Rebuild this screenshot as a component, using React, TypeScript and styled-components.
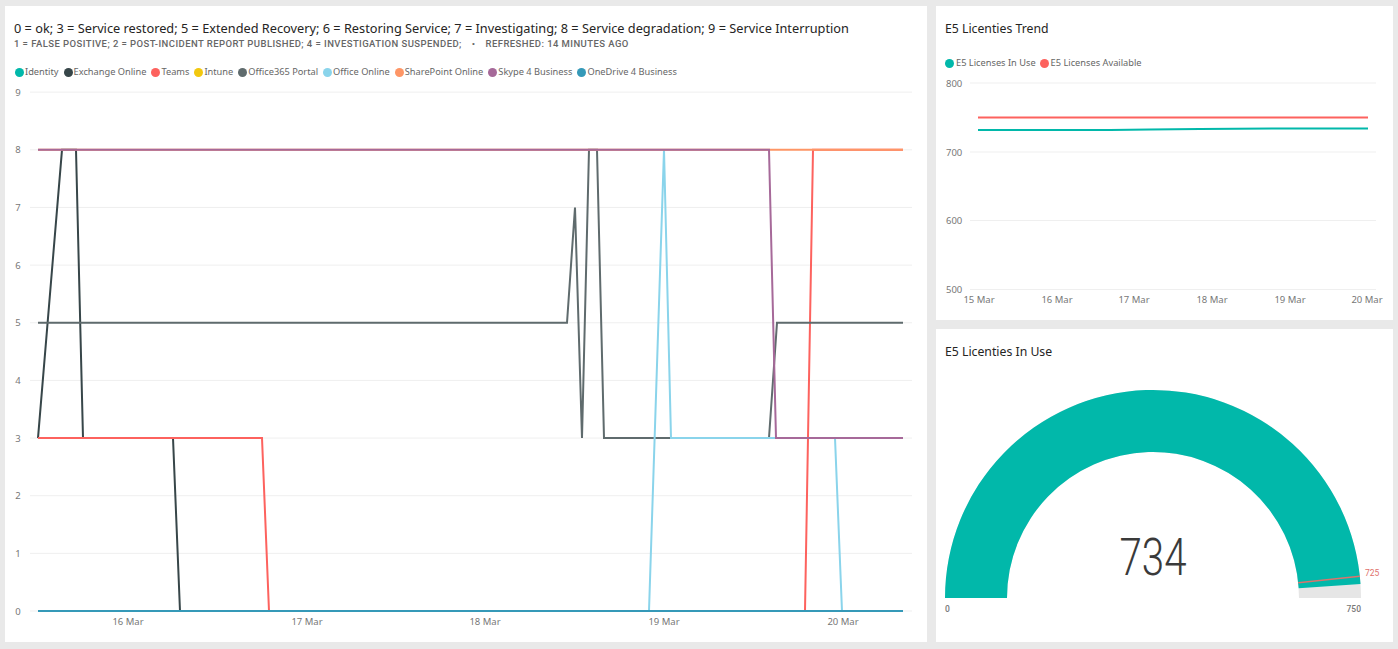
import React from "react";
import styled, { createGlobalStyle } from "styled-components";

const COLORS = {
  identity: "#01b8aa",
  exchange: "#374649",
  teams: "#fd625e",
  intune: "#f2c80f",
  portal: "#5f6b6d",
  office: "#8ad4eb",
  sharepoint: "#fe9666",
  skype: "#a66999",
  onedrive: "#3599b8",
};

const statusLegend = [
  { name: "Identity", color: COLORS.identity },
  { name: "Exchange Online", color: COLORS.exchange },
  { name: "Teams", color: COLORS.teams },
  { name: "Intune", color: COLORS.intune },
  { name: "Office365 Portal", color: COLORS.portal },
  { name: "Office Online", color: COLORS.office },
  { name: "SharePoint Online", color: COLORS.sharepoint },
  { name: "Skype 4 Business", color: COLORS.skype },
  { name: "OneDrive 4 Business", color: COLORS.onedrive },
];

const trendLegend = [
  { name: "E5 Licenses In Use", color: COLORS.identity },
  { name: "E5 Licenses Available", color: COLORS.teams },
];

// status value -> y in page pixels
const sy = (v: number) => 611 - v * 57.65;
const pts = (list: number[][]) => list.map(([x, v]) => `${x},${sy(v)}`).join(" ");

const statusSeries = [
  { color: COLORS.identity, points: [[38, 0], [903, 0]] },
  {
    color: COLORS.exchange,
    points: [[38, 3], [62, 8], [76, 8], [83, 3], [173, 3], [180, 0], [903, 0]],
  },
  {
    color: COLORS.teams,
    points: [[38, 3], [262, 3], [269, 0], [805, 0], [813, 8], [903, 8]],
  },
  { color: COLORS.intune, points: [[38, 0], [903, 0]] },
  {
    color: COLORS.portal,
    points: [
      [38, 5], [567, 5], [575, 7], [582, 3], [589, 8], [597, 8], [604, 3],
      [769, 3], [777, 5], [903, 5],
    ],
  },
  {
    color: COLORS.office,
    points: [[38, 0], [649, 0], [664, 8], [671, 3], [835, 3], [842, 0], [903, 0]],
  },
  { color: COLORS.sharepoint, points: [[38, 8], [903, 8]] },
  {
    color: COLORS.skype,
    points: [[38, 8], [769, 8], [776, 3], [903, 3]],
  },
  { color: COLORS.onedrive, points: [[38, 0], [903, 0]] },
];

const statusTicks = [0, 1, 2, 3, 4, 5, 6, 7, 8, 9];
const statusDays = [
  { label: "16 Mar", x: 128 },
  { label: "17 Mar", x: 307 },
  { label: "18 Mar", x: 485 },
  { label: "19 Mar", x: 664 },
  { label: "20 Mar", x: 843 },
];

const trendTicks = [
  { label: "800", y: 83 },
  { label: "700", y: 152 },
  { label: "600", y: 220.5 },
  { label: "500", y: 289.5 },
];
const trendDays = [
  { label: "15 Mar", x: 979 },
  { label: "16 Mar", x: 1057 },
  { label: "17 Mar", x: 1134 },
  { label: "18 Mar", x: 1212 },
  { label: "19 Mar", x: 1290 },
  { label: "20 Mar", x: 1367 },
];

// gauge geometry in page pixels
const CX = 1153;
const CY = 598;
const OUTER = 208;
const INNER = 146;
const MAX = 750;

const polar = (r: number, value: number) => {
  const a = Math.PI * (1 - value / MAX);
  return [CX + r * Math.cos(a), CY - r * Math.sin(a)];
};

const arc = (value: number) => {
  const [ox, oy] = polar(OUTER, value);
  const [ix, iy] = polar(INNER, value);
  return `M${CX - OUTER} ${CY}A${OUTER} ${OUTER} 0 0 1 ${ox} ${oy}L${ix} ${iy}A${INNER} ${INNER} 0 0 0 ${CX - INNER} ${CY}Z`;
};

const [tx1, ty1] = polar(INNER, 725);
const [tx2, ty2] = polar(OUTER, 725);

export default function App() {
  return (
    <>
      <GlobalStyle />
      <Page>
        <StatusCard>
          <StatusHeader>
            <StatusTitle>
              0 = ok; 3 = Service restored; 5 = Extended Recovery; 6 = Restoring Service; 7 =
              Investigating; 8 = Service degradation; 9 = Service Interruption
            </StatusTitle>
            <StatusSub>
              <span>
                1 = False positive; 2 = Post-incident report published; 4 = Investigation suspended;
              </span>
              <Bullet>•</Bullet>
              <span>Refreshed: 14 minutes ago</span>
            </StatusSub>
            <StatusLegend>
              {statusLegend.map((item) => (
                <LegendItem key={item.name}>
                  <Dot $color={item.color} />
                  {item.name}
                </LegendItem>
              ))}
            </StatusLegend>
          </StatusHeader>
          <ChartSvg width="922" height="558" viewBox="5 84 922 558">
            {statusTicks.map((t) => (
              <g key={t}>
                <GridLine x1="30" x2="912" y1={sy(t)} y2={sy(t)} />
                <AxisLabel x="18" y={sy(t) + 3.5} textAnchor="middle">
                  {t}
                </AxisLabel>
              </g>
            ))}
            {statusDays.map((d) => (
              <AxisLabel key={d.label} x={d.x} y="625" textAnchor="middle">
                {d.label}
              </AxisLabel>
            ))}
            {statusSeries.map((s, i) => (
              <Series key={i} $color={s.color} points={pts(s.points)} />
            ))}
          </ChartSvg>
        </StatusCard>

        <TrendCard>
          <CardTitle>E5 Licenties Trend</CardTitle>
          <TrendLegend>
            {trendLegend.map((item) => (
              <LegendItem key={item.name}>
                <Dot $color={item.color} />
                {item.name}
              </LegendItem>
            ))}
          </TrendLegend>
          <ChartSvg width="457" height="236" viewBox="936 78 457 236">
            {trendTicks.map((t) => (
              <g key={t.label}>
                <GridLine x1="970" x2="1376" y1={t.y} y2={t.y} />
                <AxisLabel x="946" y={t.y + 3.5}>
                  {t.label}
                </AxisLabel>
              </g>
            ))}
            {trendDays.map((d) => (
              <AxisLabel key={d.label} x={d.x} y="303" textAnchor="middle">
                {d.label}
              </AxisLabel>
            ))}
            <Series
              $color={COLORS.identity}
              points="978,130 1110,130 1150,129.5 1200,129 1290,128.5 1368,128.5"
            />
            <Series $color={COLORS.teams} points="978,117.5 1368,117.5" />
          </ChartSvg>
        </TrendCard>

        <GaugeCard>
          <CardTitle>E5 Licenties In Use</CardTitle>
          <GaugeSvg width="457" height="265" viewBox="936 377 457 265">
            <path d={arc(MAX)} fill="#e6e6e6" />
            <path d={arc(734)} fill={COLORS.identity} />
            <line x1={tx1} y1={ty1} x2={tx2} y2={ty2} stroke="#dc736c" strokeWidth="1.3" />
            <GaugeValue
              x={CX}
              y="575"
              textAnchor="middle"
              textLength="67"
              lengthAdjust="spacingAndGlyphs"
            >
              734
            </GaugeValue>
            <GaugeEnd x="945" y="612">
              0
            </GaugeEnd>
            <GaugeEnd x="1361" y="612" textAnchor="end">
              750
            </GaugeEnd>
            <GaugeTarget x="1365" y="576">
              725
            </GaugeTarget>
          </GaugeSvg>
        </GaugeCard>
      </Page>
    </>
  );
}

const GlobalStyle = createGlobalStyle`
  html, body {
    margin: 0;
    padding: 0;
    background: #e9e9e9;
  }
  #root {
    width: 1398px;
    height: 649px;
    overflow: hidden;
  }
`;

const Page = styled.div`
  box-sizing: border-box;
  width: 1398px;
  height: 649px;
  padding: 6px 5px 7px;
  display: grid;
  grid-template-columns: 922px 457px;
  grid-template-rows: 314px 313px;
  column-gap: 9px;
  row-gap: 9px;
  background: #e9e9e9;
  font-family: "Noto Sans", "Open Sans", sans-serif;
`;

const Card = styled.section`
  background: #ffffff;
  display: flex;
  flex-direction: column;
  overflow: hidden;
`;

const StatusCard = styled(Card)`
  grid-row: 1 / span 2;
`;

const TrendCard = styled(Card)`
  padding-top: 14px;
`;

const GaugeCard = styled(Card)`
  padding-top: 14px;
`;

const StatusHeader = styled.header`
  height: 78px;
  padding: 14px 0 0 9px;
  box-sizing: border-box;
`;

const StatusTitle = styled.div`
  font-size: 12.75px;
  line-height: 17px;
  color: #252423;
  white-space: nowrap;
`;

const StatusSub = styled.div`
  margin-top: 1px;
  display: flex;
  font-family: Roboto, sans-serif;
  font-size: 9.5px;
  font-weight: 500;
  line-height: 12px;
  letter-spacing: 0.43px;
  text-transform: uppercase;
  color: #666666;
  white-space: nowrap;
`;

const Bullet = styled.span`
  margin: 0 10px;
`;

const LegendItem = styled.span`
  display: flex;
  align-items: center;
  gap: 1px;
`;

const Legend = styled.div`
  display: flex;
  align-items: center;
  font-size: 9.25px;
  line-height: 12px;
  color: #666666;
  white-space: nowrap;
`;

const StatusLegend = styled(Legend)`
  margin-top: 16px;
  margin-left: 1px;
  gap: 5px;
`;

const TrendLegend = styled(Legend)`
  margin: 20px 0 9px 9px;
  gap: 4px;
  height: 12px;

  ${LegendItem} {
    gap: 2px;
  }
`;

const Dot = styled.i<{ $color: string }>`
  width: 9px;
  height: 9px;
  border-radius: 50%;
  background: ${(p) => p.$color};
`;

const CardTitle = styled.h2`
  margin: 0;
  padding-left: 9px;
  font-size: 12.25px;
  font-weight: 400;
  line-height: 17px;
  color: #252423;
`;

const ChartSvg = styled.svg`
  display: block;
  flex: none;
`;

const GaugeSvg = styled(ChartSvg)`
  margin-top: 17px;
`;

const GridLine = styled.line`
  stroke: #efefef;
  stroke-width: 1;
`;

const AxisLabel = styled.text`
  font-family: "Noto Sans", sans-serif;
  font-size: 9.5px;
  fill: #777777;
`;

const Series = styled.polyline<{ $color: string }>`
  fill: none;
  stroke: ${(p) => p.$color};
  stroke-width: 2;
  stroke-linejoin: miter;
`;

const GaugeValue = styled.text`
  font-family: Roboto, sans-serif;
  font-size: 51px;
  font-weight: 300;
  fill: #3a3a3a;
`;

const GaugeEnd = styled.text`
  font-family: Roboto, sans-serif;
  font-size: 8.5px;
  font-weight: 500;
  fill: #777777;
`;

const GaugeTarget = styled.text`
  font-family: Roboto, sans-serif;
  font-size: 8.5px;
  fill: #e0706c;
`;
